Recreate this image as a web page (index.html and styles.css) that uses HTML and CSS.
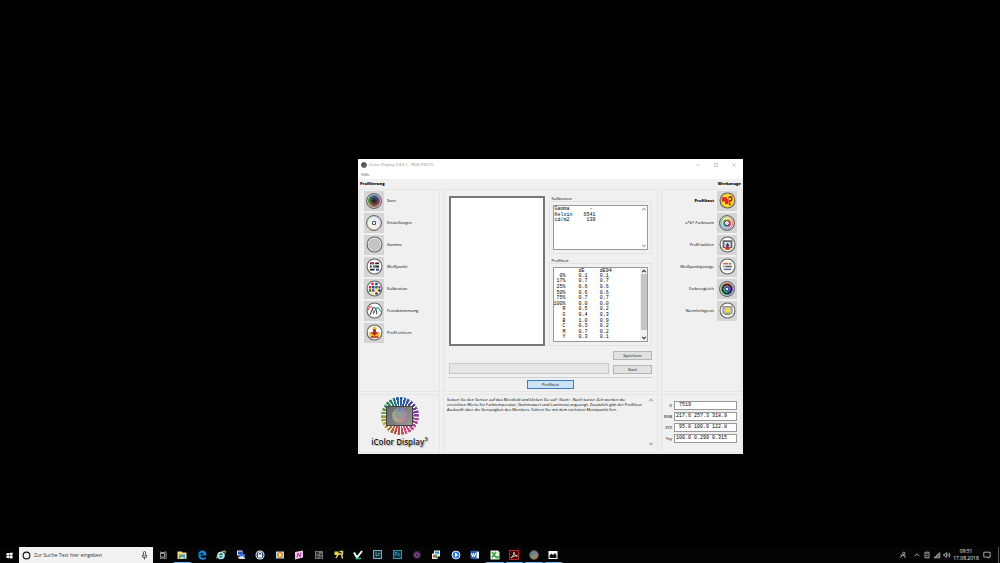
FILE: index.html
```html
<!DOCTYPE html>
<html lang="de">
<head>
<meta charset="utf-8">
<title>iColor Display</title>
<link rel="stylesheet" href="styles.css">
</head>
<body>
<main class="desktop">
  <section class="window">
    <header class="titlebar">
      <span class="app-dot"></span>
      <h1 class="title">iColor Display 3.8.5.1 - ROG PG27U</h1>
      <div class="win-controls">
        <button aria-label="Minimieren"><svg viewBox="0 0 10 10"><path d="M1 5h8"/></svg></button>
        <button aria-label="Maximieren"><svg viewBox="0 0 10 10"><path d="M1 1h8v8H1z"/></svg></button>
        <button aria-label="Schließen"><svg viewBox="0 0 10 10"><path d="M1 1l8 8M9 1l-8 8"/></svg></button>
      </div>
    </header>
    <nav class="menubar"><button>Hilfe</button></nav>
    <div class="heads"><h2>Profilierung</h2><h2>Werkzeuge</h2></div>

    <div class="columns">
      <nav class="panel steps">
        <button class="tool"><span class="tile"><span class="wheel"></span></span>Start</button>
        <button class="tool"><span class="tile"><span class="wheel disc"></span></span>Einstellungen</button>
        <button class="tool"><span class="tile"><svg viewBox="0 0 48 48"><circle class="ring" cx="24" cy="24" r="21"/><circle cx="24" cy="24" r="18" fill="#c4c4c4"/></svg></span>Gamma</button>
        <button class="tool"><span class="tile"><svg viewBox="0 0 48 48"><circle class="ring" cx="24" cy="24" r="21"/><path d="M11 15h12M26 15h11M11 24h5M20 24h17M11 33h13M28 33h9" stroke="#222" stroke-width="5"/><path d="M13 15h8" stroke="#d33" stroke-width="5"/><path d="M20 24h8" stroke="#3a6" stroke-width="5"/><path d="M29 33h7" stroke="#36c" stroke-width="5"/></svg></span>Weißpunkt</button>
        <button class="tool"><span class="tile"><svg viewBox="0 0 48 48"><circle class="ring" cx="24" cy="24" r="21"/><path d="M15 8h7v7h-7zM8 17h7v7H8z" fill="#d22"/><path d="M26 8h7v7h-7zM17 17h7v7h-7z" fill="#24a"/><path d="M26 17h7v7h-7zM8 26h7v7H8z" fill="#181"/><path d="M35 17h6v7h-6zM17 26h7v7h-7z" fill="#922c83"/><path d="M26 26h7v7h-7zM15 35h7v6h-7z" fill="#ed3"/><path d="M35 26h6v7h-6zM26 35h7v6h-7z" fill="#222"/></svg></span>Kalibration</button>
        <button class="tool"><span class="tile"><svg viewBox="0 0 48 48"><circle class="ring" cx="24" cy="24" r="21"/><g fill="none" stroke-width="3"><path d="M6 23C12 8 19 8 21 34" stroke="#d44"/><path d="M12 36C20 8 28 10 31 35" stroke="#444"/><path d="M23 31c5-17 12-21 18-4" stroke="#299"/></g></svg></span>Feinabstimmung</button>
        <button class="tool"><span class="tile"><svg viewBox="0 0 48 48"><circle class="ring" cx="24" cy="24" r="21"/><path d="M7 23h34l-5 14H12z" fill="#f0b929"/><circle cx="24" cy="13" r="6" fill="#ecc233"/><path d="M20 15h8v8h7L24 33 13 23h7z" fill="#b3213e"/><path d="M13 34h22v6H13z" fill="#ba5b27"/></svg></span>Profil sichern</button>
      </nav>

      <section class="panel center">
        <div class="work">
          <div class="field-area"></div>
          <div class="groups">
            <section class="group">
              <h3>Kalibration</h3>
              <div class="group-box">
                <div class="list short">
                  <table><tbody>
                    <tr><th>Gamma</th><td>-&nbsp;</td></tr>
                    <tr><th>Kelvin</th><td>6541</td></tr>
                    <tr><th>cd/m2</th><td>139</td></tr>
                  </tbody></table>
                  <div class="scroll idle"><svg viewBox="0 0 10 10"><path d="M2 7l3-3 3 3"/></svg><svg viewBox="0 0 10 10"><path d="M2 3l3 3 3-3"/></svg></div>
                </div>
              </div>
            </section>
            <section class="group">
              <h3>Profiltest</h3>
              <div class="group-box">
                <div class="list long">
                  <table><thead><tr><th></th><td>dE</td><td>dE94</td></tr></thead><tbody>
                    <tr><th>0%</th><td>0.1</td><td>0.1</td></tr>
                    <tr><th>17%</th><td>0.7</td><td>0.7</td></tr>
                    <tr><th>25%</th><td>0.6</td><td>0.6</td></tr>
                    <tr><th>50%</th><td>0.6</td><td>0.6</td></tr>
                    <tr><th>75%</th><td>0.7</td><td>0.7</td></tr>
                    <tr><th>100%</th><td>0.0</td><td>0.0</td></tr>
                    <tr><th>R</th><td>0.5</td><td>0.2</td></tr>
                    <tr><th>G</th><td>0.4</td><td>0.3</td></tr>
                    <tr><th>B</th><td>1.0</td><td>0.9</td></tr>
                    <tr><th>C</th><td>0.3</td><td>0.2</td></tr>
                    <tr><th>M</th><td>0.7</td><td>0.2</td></tr>
                    <tr><th>Y</th><td>0.3</td><td>0.1</td></tr>
                  </tbody></table>
                  <div class="scroll"><svg viewBox="0 0 10 10"><path d="M2 7l3-3 3 3"/></svg><span class="thumb"></span><svg viewBox="0 0 10 10"><path d="M2 3l3 3 3-3"/></svg></div>
                </div>
              </div>
            </section>
          </div>
        </div>
        <div class="actions">
          <div class="progress"></div>
          <div class="buttons"><button class="btn">Speichern</button><button class="btn">Start</button></div>
        </div>
        <div class="tabs"><button class="btn active">Profiltest</button></div>
      </section>

      <nav class="panel tools">
        <button class="tool current">Profiltest<span class="tile"><svg viewBox="0 0 48 48"><circle class="ring sun" cx="24" cy="24" r="21"/><path d="M8 15h14v5h5v14H17v-7H8z" fill="#e0262c"/><path d="M27 17q7-7 9 0t-6 8v4" fill="none" stroke="#a31515" stroke-width="4"/><path d="M28 32h5v5h-5z" fill="#a31515"/></svg></span></button>
        <button class="tool">a*b*-Farbraum<span class="tile"><span class="wheel gamut"></span></span></button>
        <button class="tool">Profil wählen<span class="tile"><svg viewBox="0 0 48 48"><circle class="ring" cx="24" cy="24" r="21"/><path d="M10 12h28v22H10z" fill="#666"/><path d="M15 17h18v14H15z" fill="#d8d8e4"/><path d="M24 19l6 9h-3v7h-6v-7h-3z" fill="#443b7c"/><path d="M15 33h18v6H15z" fill="#e4a623"/><path d="M19 31h10v7H19z" fill="#c3272f"/></svg></span></button>
        <button class="tool">Weißpunktjustage<span class="tile"><svg viewBox="0 0 48 48"><circle class="ring" cx="24" cy="24" r="21"/><circle cx="24" cy="24" r="17" fill="#f5efe2"/><g stroke-width="4"><path d="M12 16h14" stroke="#d76045"/><path d="M20 24h16" stroke="#555"/><path d="M14 32h20" stroke="#4776b8"/><path d="M27 16h9M12 24h8" stroke="#68a2c9"/></g></svg></span></button>
        <button class="tool">Farbvergleich<span class="tile"><span class="wheel target"></span></span></button>
        <button class="tool">Normlichtgerät<span class="tile"><svg viewBox="0 0 48 48"><circle class="ring" cx="24" cy="24" r="21"/><path d="M11 13h26v19H11z" fill="#bbb" stroke="#666" stroke-width="2"/><path d="M16 36h16" stroke="#777" stroke-width="3"/><circle cx="25" cy="24" r="7" fill="#f0df3c"/><path d="M22 30h6v6h-6z" fill="#b29a25"/></svg></span></button>
      </nav>

      <section class="panel brand">
        <div class="emblem"><span class="rays"></span><span class="screen"><span class="screen-ring"></span></span></div>
        <p class="brand-name">iColor Display<sup>3</sup></p>
      </section>

      <section class="panel help">
        <p>Setzen Sie den Sensor auf das Messfeld und klicken Sie auf &lt;Start&gt;. Nach kurzer Zeit werden die<br>erreichten Werte für Farbtemperatur, Gammawert und Luminanz angezeigt. Zusätzlich gibt der Profiltest<br>Auskunft über die Genauigkeit des Monitors. Fahren Sie mit dem nächsten Menüpunkt fort.</p>
        <div class="scroll idle"><svg viewBox="0 0 10 10"><path d="M2 7l3-3 3 3"/></svg><svg viewBox="0 0 10 10"><path d="M2 3l3 3 3-3"/></svg></div>
      </section>

      <form class="panel values">
        <label for="k">K</label><input id="k" value=" 7519">
        <label for="rgb">RGB</label><input id="rgb" value="217.6 257.3 318.9">
        <label for="xyz">XYZ</label><input id="xyz" value=" 95.0 100.0 122.8">
        <label for="yxy">Yxy</label><input id="yxy" value="100.0 0.299 0.315">
      </form>
    </div>
  </section>
</main>

<footer class="taskbar">
  <button class="start" aria-label="Start"><svg viewBox="0 0 16 16"><path fill="#fff" d="M1 3l6-1v6H1zM8 2l7-1v7H8zM1 9h6v5l-6-1zM8 9h7v6l-7-1z"/></svg></button>
  <label class="search">
    <svg viewBox="0 0 16 16"><circle cx="8" cy="8" r="6" fill="none" stroke="#111" stroke-width="2"/></svg>
    <input aria-label="Suche" placeholder="Zur Suche Text hier eingeben">
    <svg viewBox="0 0 16 16"><rect x="6" y="1" width="4" height="8" rx="2" fill="none" stroke="#333" stroke-width="1.5"/><path d="M4 7v2q0 3 4 3t4-3V7M8 12v3" fill="none" stroke="#333" stroke-width="1.5"/></svg>
  </label>
  <div class="apps">
    <button aria-label="Taskansicht"><svg viewBox="0 0 20 20"><path d="M5 7h8v7H5zM5 3v2h8V3M5 18v-2h8v2M16 3v15" fill="none" stroke="#ccc" stroke-width="1.5"/></svg></button>
    <button class="open" aria-label="Explorer"><svg viewBox="0 0 20 20"><path d="M1 3h8l2 2h8v13H1z" fill="#f2dc7c"/><path d="M4 9h12v9h-3v-4H7v4H4z" fill="#49a0ba"/></svg></button>
    <button aria-label="Edge"><svg viewBox="0 0 20 20"><path d="M2 10C2 4 6 1 11 1s8 4 8 10H7c0 5 6 6 11 3v4c-8 4-15 0-15-6 0-3 2-5 5-6-1 1-1 2-1 3h6c0-5-7-5-11 1z" fill="#168be6"/></svg></button>
    <button aria-label="Internet Explorer"><svg viewBox="0 0 20 20"><path d="M16 13c-3 6-12 5-12-2S15 3 16 11H6" fill="none" stroke="#a0eaf5" stroke-width="3.5"/><path d="M2 17C-1 14 10 2 18 2c2 1 0 4-1 5" fill="none" stroke="#efdf76" stroke-width="2"/></svg></button>
    <button aria-label="Remotedesktop"><svg viewBox="0 0 20 20"><path d="M2 1h11v10H2z" fill="#d9e4fa"/><path d="M4 3h8v6H4z" fill="#2353c8"/><path d="M8 8h10v6H8z" fill="#3e70dc"/><path d="M3 14l11-2 5 6H7z" fill="#e1e4ed"/></svg></button>
    <button aria-label="Passwörter"><svg viewBox="0 0 20 20"><circle cx="10" cy="10" r="9" fill="#dbe5fa"/><circle cx="10" cy="10" r="7" fill="#344974"/><path d="M7 9V6q3-4 6 0v3" fill="none" stroke="#fff" stroke-width="2"/><path d="M6 9h8v6H6z" fill="#fff"/></svg></button>
    <button aria-label="Player"><svg viewBox="0 0 20 20"><path d="M2 3h16v14H2z" fill="#b2dce4"/><circle cx="10" cy="10" r="6" fill="#e88a22"/><path d="M8 6l6 4-6 4z" fill="#fff"/></svg></button>
    <button aria-label="Notizen"><svg viewBox="0 0 20 20"><path d="M2 4l16-3v14L2 19z" fill="#f2c6ef"/><path d="M6 15l2-9 4 8 2-9" fill="none" stroke="#a33492" stroke-width="2"/></svg></button>
    <button aria-label="Bilder"><svg viewBox="0 0 20 20"><path d="M2 2h16v16H2z" fill="#777"/><path d="M4 4h6v5H4zM12 7h4v4h-4zM4 11h5v5H4zM11 13h5v4h-5z" fill="#333"/></svg></button>
    <button aria-label="Schlüssel"><svg viewBox="0 0 20 20"><path d="M1 3h8v7H1z" fill="#ecce3e"/><path d="M8 8h7l2 9M8 9l-4 7M11 3h6v6" fill="none" stroke="#e5d476" stroke-width="3"/></svg></button>
    <button aria-label="Prüfung"><svg viewBox="0 0 20 20"><path d="M2 5l6 10L18 2" fill="none" stroke="#e4fff5" stroke-width="4"/><path d="M5 17h11" stroke="#20b899" stroke-width="3"/></svg></button>
    <button aria-label="Lightroom"><span class="adobe">Lr</span></button>
    <button aria-label="Photoshop"><span class="adobe ps">Ps</span></button>
    <button aria-label="Kamera"><svg viewBox="0 0 20 20"><circle cx="10" cy="10" r="8" fill="#39213f"/><circle cx="10" cy="10" r="4" fill="none" stroke="#9b5aaa" stroke-width="2"/></svg></button>
    <button aria-label="Fotos"><svg viewBox="0 0 20 20"><path d="M6 1h12v12H6z" fill="#e8eef2"/><path d="M8 3h8v5H8z" fill="#2794ce"/><path d="M2 7h11v11H2z" fill="#e9e9e3"/><path d="M4 10h4v5H4z" fill="#df5934"/><path d="M8 9h4v7H8z" fill="#48a35b"/></svg></button>
    <button aria-label="Wiedergabe"><svg viewBox="0 0 20 20"><circle cx="10" cy="10" r="8" fill="#2f7ad8" stroke="#d2e5fb" stroke-width="2"/><path d="M8 5l6 5-6 5z" fill="#fff"/></svg></button>
    <button aria-label="Word"><svg viewBox="0 0 20 20"><path d="M8 3h10v14H8z" fill="#e6effb"/><path d="M1 2l12-1v18L1 17z" fill="#2864b4"/><path d="M3 6l2 8 2-7 2 7 2-8" fill="none" stroke="#fff" stroke-width="2"/></svg></button>
    <button class="open" aria-label="Excel"><svg viewBox="0 0 20 20"><path d="M1 1h15l3 3v15H1z" fill="#e1f4d7"/><path d="M4 4l8 11M12 4L4 15" stroke="#3d9d45" stroke-width="3"/><path d="M12 12h6v5h-6z" fill="#5aae58"/></svg></button>
    <button class="open" aria-label="Acrobat"><svg viewBox="0 0 20 20"><path d="M1 1h18v18H1z" fill="#370606" stroke="#c42125" stroke-width="2"/><path d="M4 16c4-4 6-8 6-12 0 5 3 8 7 8-5-1-9 1-13 4z" fill="none" stroke="#fff" stroke-width="1.5"/></svg></button>
    <button class="open" aria-label="iColor"><span class="app-dot"></span></button>
    <button class="open" aria-label="Fotoanzeige"><svg viewBox="0 0 20 20"><path d="M1 2h18v16H1z" fill="#fff"/><path d="M3 16v-5l4-4 3 3 4-4 3 5v5z" fill="#111"/></svg></button>
  </div>
  <div class="tray">
    <svg viewBox="0 0 20 20"><circle cx="12" cy="6" r="3"/><path d="M3 17l5-7 7 2v5M4 9l4 3"/></svg>
    <svg viewBox="0 0 20 20"><path d="M4 13l6-6 6 6"/></svg>
    <svg viewBox="0 0 20 20"><path d="M5 3h10v14H5zM8 7h4M8 12h4"/></svg>
    <svg viewBox="0 0 20 20"><path d="M3 17L17 4v13zM8 16q0-6 8-7M12 16q0-3 4-3"/></svg>
    <svg viewBox="0 0 20 20"><path d="M2 8h3l4-4v12l-4-4H2zM12 7q2 3 0 6M15 4q5 6 0 12"/></svg>
    <time class="clock"><span>09:51</span><span>17.08.2018</span></time>
    <svg class="note" viewBox="0 0 20 20"><path d="M2 3h16v12h-4v3l-4-3H2z"/></svg>
    <span class="peek"></span>
  </div>
</footer>
</body>
</html>
```
FILE: styles.css
```css
* { box-sizing: border-box; }
body {
  margin: 0;
  height: 100vh;
  display: flex;
  flex-direction: column;
  overflow: hidden;
  background: #000;
  color: #000;
  font: 500 4px/5px "Open Sans", "Noto Sans", sans-serif;
}
h1, h2, h3, p { margin: 0; font: inherit; }
button, input { margin: 0; padding: 0; border: 0; background: none; color: inherit; font: inherit; }
svg { display: block; }

.desktop { flex: 1; position: relative; }
.window {
  position: absolute;
  left: 35.8%;
  top: 29%;
  width: 38.5%;
  background: #f0f0f0;
}
.titlebar { display: flex; align-items: center; gap: 2px; height: 12px; padding: 0 7px 0 3px; background: #fff; color: #888; }
.app-dot {
  width: 6px;
  height: 6px;
  border-radius: 50%;
  background: conic-gradient(#667, #555, #866, #776, #565, #333, #667);
  border: 1px solid #555;
}
.title { flex: 1; }
.win-controls { display: flex; gap: 14px; }
.win-controls svg { width: 4px; height: 4px; fill: none; stroke: #bbb; stroke-width: 2; }
.menubar { display: flex; height: 8px; padding: 0 3px; background: #fff; color: #444; }
.heads { display: flex; justify-content: space-between; height: 10px; padding: 2px 2px 0; }
.heads h2 { font-weight: 800; }

.columns {
  display: grid;
  grid-template-columns: 81fr 215fr 81fr;
  grid-template-rows: auto auto;
  gap: 2px 3px;
  padding: 0 1px 1px;
}
.panel { border: 1px solid #e5e5e5; min-width: 0; }
.steps, .tools { display: flex; flex-direction: column; gap: 2px; padding: 1px 4px; }
.tool { display: flex; align-items: center; gap: 3px; text-align: left; }
.tools { align-items: flex-end; }
.tool.current { font-weight: 800; }
.tile { display: grid; place-items: center; width: 20px; height: 20px; background: #d5d5d5; }
.tile svg { width: 17px; height: 17px; }
.ring { fill: #fff; stroke: #606060; stroke-width: 3; }
.sun { fill: #f7d72c; }
.wheel {
  width: 16px;
  height: 16px;
  border: 1px solid #666;
  border-radius: 50%;
  background: radial-gradient(closest-side, #222 10%, #3330 75%), conic-gradient(#386b9b, #694b91, #a04863, #a76345, #8a914d, #3d875d, #386b9b);
  box-shadow: inset 0 0 0 1px #ccc;
}
.disc { background: radial-gradient(closest-side, #fff 12%, #555 16% 28%, #fff9 34%), conic-gradient(#b8d9e8, #d9c8ee, #f2cadb, #eee5b9, #c6e8c7, #b8d9e8); }
.gamut { background: radial-gradient(closest-side, #e9d4eb 26%, #555 30% 40%, #fff0 44% 60%, #fffa 64% 76%, #fff0 80%), conic-gradient(#e3d544, #ef864b, #e54e7d, #7b76c8, #42b6b7, #61c75c, #e3d544); }
.target { background: radial-gradient(closest-side, #e6e9f5 16%, #355ac1 20% 34%, #3330 38% 52%, #222 56% 70%, #2220 74%), conic-gradient(#d44345, #7b3ea0, #385ab7, #38a75d, #46a46a, #d44345); }

.center { display: flex; flex-direction: column; padding: 6px 5px 1px; }
.work { display: flex; gap: 4px; }
.field-area { flex: 93; background: #fff; border: 2px solid #777; }
.groups { flex: 105; min-width: 0; display: flex; flex-direction: column; gap: 4px; }
.group h3 { padding-left: 3px; }
.group-box { padding: 3px; border: 1px solid #e3e3e3; }
.list { display: flex; justify-content: space-between; background: #fff; border: 1px solid #999; }
.list table { border-collapse: collapse; font: 5px/5px "Liberation Mono", monospace; }
.list th { font-weight: 400; text-align: left; padding: 0 0 0 1px; }
.list td { padding: 0; text-align: right; }
.short { height: 45px; }
.short table { align-self: flex-start; height: 17px; margin-top: 1px; }
.short td { width: 23px; }
.long { height: 75px; }
.long table { height: 72px; margin-top: 1px; }
.list.long th { width: 12px; padding: 0; text-align: right; }
.list.long td { width: 22px; text-align: left; padding-left: 13px; }
.list.long td:last-child { padding-left: 12px; }
.scroll { display: flex; flex-direction: column; justify-content: space-between; width: 7px; background: #f0f0f0; align-items: center; }
.scroll svg { width: 6px; height: 6px; fill: none; stroke: #333; stroke-width: 2; }
.scroll.idle { background: none; }
.scroll.idle svg { stroke: #aaa; }
.thumb { flex: 1; width: 6px; margin-bottom: 5px; background: #c5c5c5; }
.actions { display: flex; align-items: flex-end; gap: 4px; margin-top: 5px; padding-bottom: 3px; border-bottom: 1px solid #d0d0d0; }
.progress { flex: 1; height: 11px; background: #e6e6e6; border: 1px solid #c8c8c8; }
.buttons { display: flex; flex-direction: column; gap: 5px; }
.btn { width: 39px; height: 9px; background: #e1e1e1; border: 1px solid #b5b5b5; }
.btn.active { width: 47px; background: #cce4f7; border-color: #397bc0; }
.tabs { display: flex; justify-content: center; padding: 2px 0 1px; }

.brand { display: flex; flex-direction: column; align-items: center; padding-top: 2px; }
.emblem { display: grid; place-items: center; width: 38px; height: 38px; }
.emblem > * { grid-area: 1 / 1; }
.rays {
  width: 38px;
  height: 38px;
  border-radius: 50%;
  background: repeating-conic-gradient(transparent 0 7deg, #f0f0f0 9deg 12deg), conic-gradient(#235d9d, #43459b, #783ca0, #b93fa0, #cf517a, #b14e38, #c8a338, #72a044, #2c8565, #235d9d);
}
.screen { display: grid; place-items: center; width: 27px; height: 20px; border: 1px solid #444; background: linear-gradient(135deg, #666, #999); }
.screen-ring { width: 15px; height: 15px; border-radius: 50%; background: radial-gradient(closest-side, #999 50%, #aaa0 58%), repeating-conic-gradient(transparent 0 12deg, #999 14deg 24deg), conic-gradient(#5b7dc5, #a87cb7, #d27591, #d0ad66, #8eb971, #5b7dc5); }
.brand-name { font: 600 8px/12px "Open Sans", sans-serif; color: #222; text-shadow: 1px 1px 1px #aaa; padding-top: 1px; }
.brand-name sup { font-size: 6px; line-height: 0; }
.help { display: flex; justify-content: space-between; padding: 2px 3px 5px; min-height: 59px; }
.help p { white-space: nowrap; }
.values { display: grid; grid-template-columns: 10px 1fr; column-gap: 2px; row-gap: 2px; align-content: start; align-items: center; padding: 6px 4px 0 0; }
.values label { text-align: right; }
.values input { width: 100%; height: 9px; padding: 0 1px; border: 1px solid #999; background: #fff; font: 5px/7px "Liberation Mono", monospace; }

.taskbar { display: flex; align-items: stretch; height: 16px; background: #050505; color: #eee; }
.start { display: grid; place-items: center; width: 19px; }
.start svg { width: 7px; height: 7px; }
.search { display: flex; align-items: center; gap: 3px; width: 13.4%; padding: 0 4px 0 3px; background: #f2f2f2; }
.search svg { width: 9px; height: 9px; }
.search input { flex: 1; min-width: 0; color: #333; font-size: 5px; }
.search input::placeholder { color: #333; opacity: 1; }
.apps { display: flex; width: 41%; }
.apps button { flex: 1; display: grid; place-items: center; border: solid transparent; border-width: 0 2px 1px; }
.apps .open { border-bottom-color: #76b9ed; }
.apps svg { width: 10px; height: 10px; }
.apps .app-dot { width: 10px; height: 10px; background: conic-gradient(#6c83a0, #957791, #a88462, #83945f, #578a7b, #6c83a0); }
.adobe { width: 9px; height: 9px; border: 1px solid #78a9c6; background: #12303e; color: #a8d8ef; line-height: 7px; font-size: 5px; }
.ps { color: #31c5f0; border-color: #239cc0; }
.tray { display: flex; align-items: center; gap: 2px; margin-left: auto; }
.tray svg { width: 8px; height: 8px; fill: none; stroke: #ccc; stroke-width: 2; }
.tray svg:first-child { margin-right: 4px; }
.clock { display: flex; flex-direction: column; align-items: center; line-height: 7px; width: 26px; font-size: 5px; }
.tray .note { margin: 0 5px 0 2px; }
.peek { width: 2px; height: 16px; border-left: 1px solid #555; }
```
